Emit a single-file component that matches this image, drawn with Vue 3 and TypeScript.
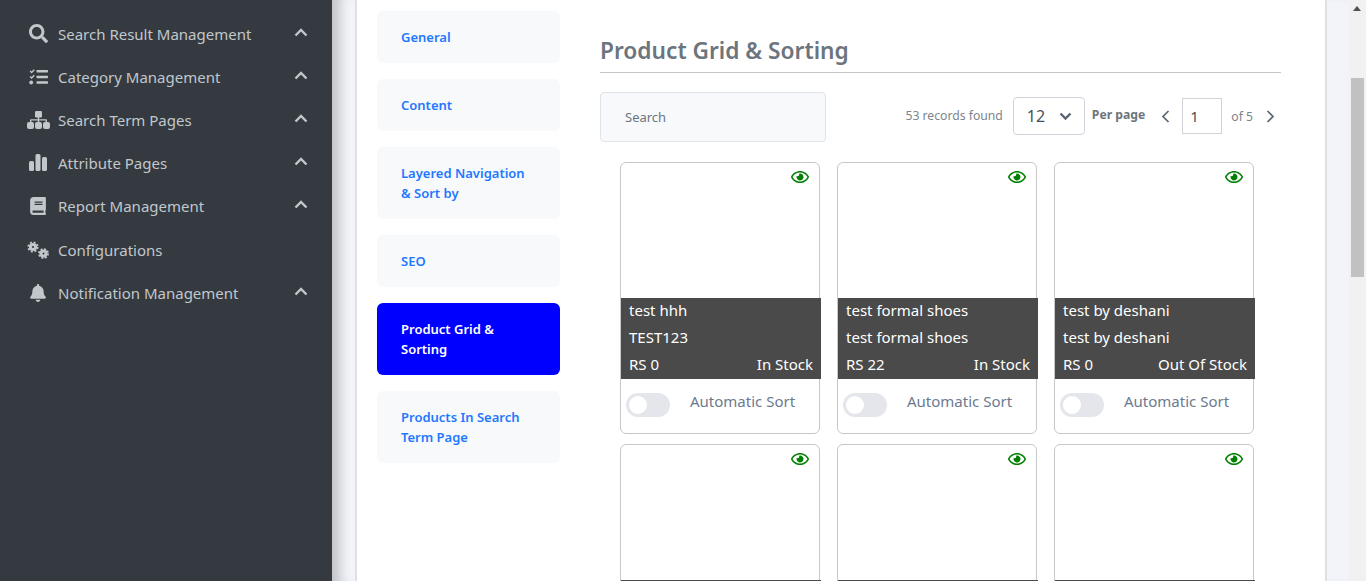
<script setup lang="ts">
interface MenuItem {
  label: string
  icon: string
  open: boolean
}

interface Product {
  name: string
  sku: string
  price: string
  stock: string
}

const menu: MenuItem[] = [
  { label: 'Search Result Management', icon: 'search', open: true },
  { label: 'Category Management', icon: 'tasks', open: true },
  { label: 'Search Term Pages', icon: 'sitemap', open: true },
  { label: 'Attribute Pages', icon: 'chart', open: true },
  { label: 'Report Management', icon: 'book', open: true },
  { label: 'Configurations', icon: 'cogs', open: false },
  { label: 'Notification Management', icon: 'bell', open: true },
]

const tabs = [
  { label: 'General', active: false },
  { label: 'Content', active: false },
  { label: 'Layered Navigation & Sort by', active: false },
  { label: 'SEO', active: false },
  { label: 'Product Grid & Sorting', active: true },
  { label: 'Products In Search Term Page', active: false },
]

const products: Product[] = [
  { name: 'test hhh', sku: 'TEST123', price: 'RS 0', stock: 'In Stock' },
  { name: 'test formal shoes', sku: 'test formal shoes', price: 'RS 22', stock: 'In Stock' },
  { name: 'test by deshani', sku: 'test by deshani', price: 'RS 0', stock: 'Out Of Stock' },
  { name: 'test hhh', sku: 'TEST123', price: 'RS 0', stock: 'In Stock' },
  { name: 'test formal shoes', sku: 'test formal shoes', price: 'RS 22', stock: 'In Stock' },
  { name: 'test by deshani', sku: 'test by deshani', price: 'RS 0', stock: 'Out Of Stock' },
]
</script>

<template>
  <div class="page">
    <aside class="sidebar">
      <ul class="menu">
        <li v-for="item in menu" :key="item.label" class="menu-item">
          <span class="menu-icon">
            <svg v-if="item.icon === 'search'" width="19" height="19" viewBox="0 0 512 512" fill="currentColor"><path d="M505 442.7L405.3 343c-4.5-4.5-10.6-7-17-7H372c27.6-35.3 44-79.7 44-128C416 93.1 322.9 0 208 0S0 93.1 0 208s93.1 208 208 208c48.3 0 92.7-16.4 128-44v16.3c0 6.4 2.5 12.5 7 17l99.7 99.7c9.4 9.4 24.6 9.4 33.9 0l28.3-28.3c9.4-9.4 9.4-24.6.1-34zM208 336c-70.7 0-128-57.2-128-128 0-70.7 57.2-128 128-128 70.7 0 128 57.2 128 128 0 70.7-57.2 128-128 128z" /></svg>
            <svg v-else-if="item.icon === 'tasks'" width="19" height="16" viewBox="0 0 19 16" fill="currentColor"><path d="M.6 2.4 1.6 1.4 2.6 2.4 4.8.2 5.8 1.2 2.6 4.4zM.6 7.9 1.6 6.9 2.6 7.9 4.8 5.7 5.8 6.7 2.6 9.9z" /><circle cx="2.2" cy="13.5" r="1.9" /><rect x="7.5" y="1" width="11.5" height="2.4" rx=".6" /><rect x="7.5" y="6.8" width="11.5" height="2.4" rx=".6" /><rect x="7.5" y="12.3" width="11.5" height="2.4" rx=".6" /></svg>
            <svg v-else-if="item.icon === 'sitemap'" width="23" height="18" viewBox="0 0 23 18" fill="currentColor"><rect x="8" y="0" width="7" height="6.500" rx="1.200" /><path d="M10.800 6h1.400v2.200H19a1 1 0 0 1 1 1V12h-1.400V9.600h-6.400V12h-1.400V9.600H4.400V12H3V9.200a1 1 0 0 1 1-1h6.800z" /><rect x="0" y="11" width="7" height="7" rx="2" /><rect x="8" y="11" width="7" height="7" rx="2" /><rect x="16" y="11" width="7" height="7" rx="2" /></svg>
            <svg v-else-if="item.icon === 'chart'" width="18" height="17" viewBox="0 0 18 17" fill="currentColor"><rect x="0" y="7" width="5" height="10" rx="1.500" /><rect x="6.500" y="0" width="5" height="17" rx="1.500" /><rect x="13" y="3" width="5" height="14" rx="1.500" /></svg>
            <svg v-else-if="item.icon === 'book'" width="16" height="18" viewBox="0 0 448 512" fill="currentColor"><path d="M448 360V24c0-13.3-10.7-24-24-24H96C43 0 0 43 0 96v320c0 53 43 96 96 96h328c13.3 0 24-10.7 24-24v-16c0-7.500-3.500-14.300-8.900-18.700-4.200-15.400-4.200-59.300 0-74.700 5.400-4.300 8.900-11.100 8.900-18.600zM128 134c0-3.300 2.700-6 6-6h212c3.300 0 6 2.700 6 6v20c0 3.300-2.700 6-6 6H134c-3.300 0-6-2.700-6-6v-20zm0 64c0-3.300 2.700-6 6-6h212c3.300 0 6 2.700 6 6v20c0 3.300-2.700 6-6 6H134c-3.300 0-6-2.700-6-6v-20zm253.400 250H96c-17.700 0-32-14.300-32-32 0-17.600 14.400-32 32-32h285.400c-1.900 17.100-1.900 46.900 0 64z" /></svg>
            <svg v-else-if="item.icon === 'cogs'" width="23" height="18" viewBox="0 0 23 18" fill="none" stroke="currentColor"><circle cx="6" cy="6" r="2.600" stroke-width="3" /><circle cx="6" cy="6" r="4.700" stroke-width="1.800" stroke-dasharray="2 1.690" /><circle cx="16.500" cy="12.500" r="2.500" stroke-width="3" /><circle cx="16.500" cy="12.500" r="4.500" stroke-width="1.800" stroke-dasharray="2 1.530" /></svg>
            <svg v-else width="16" height="18" viewBox="0 0 448 512" fill="currentColor"><path d="M224 512c35.320 0 63.970-28.650 63.970-64H160.030c0 35.350 28.650 64 63.970 64zm215.390-149.710c-19.320-20.760-55.470-51.990-55.470-154.290 0-77.700-54.480-139.900-127.940-155.160V32c0-17.670-14.320-32-31.980-32s-31.980 14.330-31.980 32v20.840C118.560 68.100 64.080 130.300 64.080 208c0 102.300-36.150 133.530-55.470 154.290-6 6.450-8.660 14.160-8.610 21.710.11 16.400 12.980 32 32.100 32h383.800c19.120 0 32-15.600 32.100-32 .05-7.550-2.610-15.270-8.610-21.710z" /></svg>
          </span>
          <span class="menu-label">{{ item.label }}</span>
          <svg v-if="item.open" class="menu-caret" width="14" height="9" viewBox="0 0 14 9" fill="none" stroke="currentColor" stroke-width="2.400"><path d="M1.500 7.500 7 2l5.500 5.500" /></svg>
        </li>
      </ul>
    </aside>

    <main class="main">
      <div class="card">
        <nav class="tabs">
          <a v-for="tab in tabs" :key="tab.label" class="tab" :class="{ active: tab.active }">{{ tab.label }}</a>
        </nav>

        <section class="content">
          <h2 class="title">Product Grid &amp; Sorting</h2>

          <div class="toolbar">
            <div class="search">Search</div>
            <div class="pager">
              <span class="records">53 records found</span>
              <div class="per-select">
                <span>12</span>
                <svg width="13" height="9" viewBox="0 0 13 9" fill="none" stroke="#5b6470" stroke-width="2.400"><path d="M1.500 1.500 6.500 6.500l5-5" /></svg>
              </div>
              <b class="per-label">Per page</b>
              <svg class="chev prev" width="9" height="13" viewBox="0 0 9 13" fill="none" stroke="#5b6470" stroke-width="1.700"><path d="M7.500 1 2 6.500 7.500 12" /></svg>
              <div class="page-input">1</div>
              <span class="of">of 5</span>
              <svg class="chev next" width="9" height="13" viewBox="0 0 9 13" fill="none" stroke="#5b6470" stroke-width="1.700"><path d="M1.500 1 7 6.500 1.500 12" /></svg>
            </div>
          </div>

          <div class="grid">
            <article v-for="(product, i) in products" :key="i" class="product">
              <svg class="eye" width="18" height="16" viewBox="0 0 576 512" fill="#008000"><path d="M288 144a110.940 110.940 0 0 0-31.240 5 55.400 55.400 0 0 1 7.240 27 56 56 0 0 1-56 56 55.400 55.400 0 0 1-27-7.240A111.710 111.710 0 1 0 288 144zm284.520 97.400C518.290 135.590 410.930 64 288 64S57.680 135.640 3.480 241.410a32.350 32.350 0 0 0 0 29.190C57.710 376.410 165.070 448 288 448s230.320-71.640 284.520-177.410a32.350 32.350 0 0 0 0-29.190zM288 400c-98.650 0-189.090-55-237.930-144C98.910 167 189.340 112 288 112s189.090 55 237.930 144C477.100 345 386.660 400 288 400z" /></svg>
              <div class="info">
                <div class="info-row">{{ product.name }}</div>
                <div class="info-row">{{ product.sku }}</div>
                <div class="info-row info-last"><span>{{ product.price }}</span><span>{{ product.stock }}</span></div>
              </div>
              <div class="sort">
                <span class="toggle"><span class="knob" /></span>
                <span class="sort-label">Automatic Sort</span>
              </div>
            </article>
          </div>
        </section>
      </div>
    </main>

    <div class="scrollbar">
      <span class="arrow" />
      <span class="thumb" />
    </div>
  </div>
</template>

<style scoped>
.page {
  display: flex;
  height: 581px;
  overflow: hidden;
  background: #f3f4f9;
  font-family: "Noto Sans", "Open Sans", sans-serif;
}

.sidebar {
  flex: 0 0 332px;
  background: #343a40;
  color: #c2c7cc;
}

.menu {
  list-style: none;
  margin: 0;
  padding: 12px 0 0;
}

.menu-item {
  display: flex;
  align-items: center;
  height: 43px;
}

.menu-item:nth-child(6) {
  margin-top: 1px;
}

.menu-icon {
  flex: 0 0 58px;
  display: flex;
  justify-content: center;
  padding: 0 8px 0 26px;
  box-sizing: border-box;
}

.menu-label {
  flex: 1;
  font-size: 15px;
}

.menu-caret {
  margin-right: 24px;
  margin-top: -3px;
}

.main {
  flex: 1;
  padding: 0 22px 0 23px;
  box-shadow: inset 16px 0 12px -8px rgba(0, 0, 0, 0.2);
}

.card {
  display: flex;
  background: #fff;
  height: 100%;
  border: solid #dfe0e4;
  border-width: 0 2px;
  padding: 11px 44px 0 20px;
  box-sizing: border-box;
}

.tabs {
  flex: 0 0 183px;
  display: flex;
  flex-direction: column;
  gap: 16px;
  margin-right: 40px;
}

.tab {
  display: flex;
  align-items: center;
  min-height: 52px;
  padding: 16px 32px 16px 24px;
  box-sizing: border-box;
  background: #f8f9fb;
  border-radius: 6px;
  color: #1f78ff;
  font-size: 13px;
  font-weight: 600;
  line-height: 20px;
}

.tab.active {
  background: #0000ff;
  color: #fff;
}

.content {
  flex: 1;
}

.title {
  margin: 21px 0 0;
  padding-bottom: 3px;
  border-bottom: 1px solid #c4c6c9;
  color: #6c757d;
  font-size: 22.7px;
  font-weight: 600;
  line-height: 37px;
}

.toolbar {
  display: flex;
  justify-content: space-between;
  align-items: flex-start;
  margin-top: 19px;
}

.search {
  width: 226px;
  height: 50px;
  display: flex;
  align-items: center;
  padding-left: 24px;
  box-sizing: border-box;
  background: #f8f9fb;
  border: 1px solid #dfe3ea;
  border-radius: 4px;
  color: #6c757d;
  font-size: 13px;
}

.pager {
  display: flex;
  align-items: center;
  height: 48px;
  margin-right: 6px;
  color: #7c858d;
  font-size: 12.2px;
}

.records {
  margin: -2px 10px 0 0;
}

.per-select {
  width: 72px;
  height: 38px;
  display: flex;
  align-items: center;
  justify-content: space-between;
  padding: 0 12px 0 13px;
  box-sizing: border-box;
  border: 1px solid #cfd4da;
  border-radius: 4px;
  color: #495057;
  font-size: 16px;
}

.per-label {
  margin: -3px 16px 0 7px;
  color: #6c757d;
  font-weight: 700;
}

.page-input {
  width: 40px;
  height: 36px;
  display: flex;
  align-items: center;
  padding-left: 7px;
  box-sizing: border-box;
  margin: 0 9px 0 12px;
  border: 1px solid #cfd4da;
  color: #495057;
  font-size: 15px;
}

.of {
  margin-right: 13px;
}

.grid {
  display: grid;
  grid-template-columns: repeat(3, 200px);
  gap: 10px 17px;
  margin: 20px 0 0 20px;
}

.product {
  position: relative;
  height: 272px;
  box-sizing: border-box;
  padding-top: 135px;
  border: 1px solid #c8c8c8;
  border-radius: 6px;
}

.eye {
  position: absolute;
  top: 6px;
  right: 10px;
}

.info {
  margin: 0 -2px 0 0;
  background: #4a4a4a;
  color: #fff;
  font-size: 15px;
  padding: 0 8px 0 8px;
}

.info-row {
  height: 27px;
  line-height: 25px;
}

.info-last {
  display: flex;
  justify-content: space-between;
}

.sort {
  display: flex;
  align-items: flex-start;
  padding: 14px 0 0 5px;
}

.toggle {
  width: 44px;
  height: 24px;
  display: block;
  border-radius: 12px;
  background: #e4e6eb;
}

.knob {
  display: block;
  width: 18px;
  height: 18px;
  margin: 3px;
  border-radius: 50%;
  background: #fff;
}

.sort-label {
  margin-left: 20px;
  color: #6c7a90;
  font-size: 15px;
  line-height: 16px;
}

.scrollbar {
  flex: 0 0 17px;
  position: relative;
  background: #f1f1f1;
}

.arrow {
  position: absolute;
  top: 6px;
  left: 4px;
  border: 4px solid transparent;
  border-top: 0;
  border-left-width: 4.5px;
  border-right-width: 4.5px;
  border-bottom: 5px solid #505050;
}

.thumb {
  position: absolute;
  top: 78px;
  left: 2px;
  width: 13px;
  height: 199px;
  background: #c1c1c1;
}
</style>
